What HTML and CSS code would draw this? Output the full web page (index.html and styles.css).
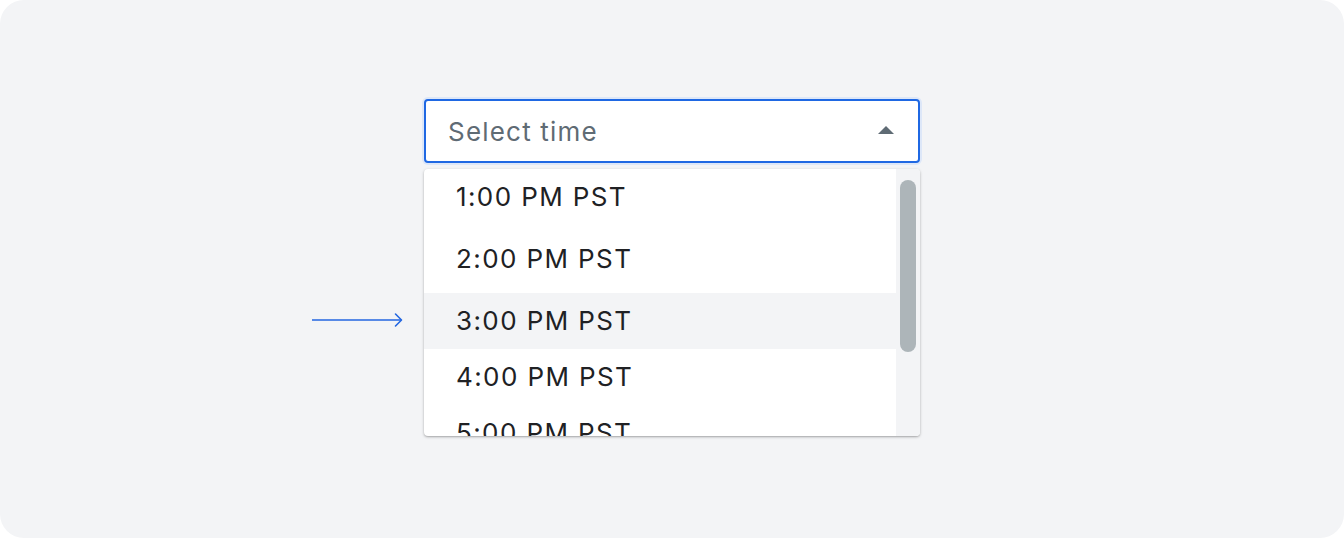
FILE: index.html
```html
<!DOCTYPE html>
<html>
<head>
<meta charset="utf-8">
<link rel="stylesheet" href="styles.css">
</head>
<body>
<div class="panel">
  <div class="combo">
    <div class="pointer">
      <svg width="92" height="16" viewBox="0 0 92 16"><path d="M0 8 H89" stroke="#2366e0" stroke-width="1.6" fill="none"/><path d="M83.5 2 L89.5 8 L83.5 14" stroke="#2366e0" stroke-width="1.6" fill="none" stroke-linecap="round" stroke-linejoin="round"/></svg>
    </div>
    <div class="select">
      <span class="placeholder">Select time</span>
      <span class="caret"></span>
    </div>
    <div class="menu">
      <div class="list">
        <div class="item spaced">1:00 PM PST</div>
        <div class="item spaced">2:00 PM PST</div>
        <div class="item active">3:00 PM PST</div>
        <div class="item">4:00 PM PST</div>
        <div class="item">5:00 PM PST</div>
      </div>
      <div class="track"><div class="thumb"></div></div>
    </div>
  </div>
</div>
</body>
</html>
```
FILE: styles.css
```css
* { box-sizing: border-box; }
html, body { margin: 0; padding: 0; background: #ffffff; }
body { font-family: Inter, "Noto Sans", sans-serif; }
.panel {
  width: 1344px;
  height: 538px;
  background: #f3f4f6;
  border-radius: 24px;
  display: flex;
  flex-direction: column;
  align-items: center;
  padding-top: 99px;
}
.combo {
  position: relative;
  width: 496px;
}
.pointer {
  position: absolute;
  left: -112px;
  top: 213px;
  line-height: 0;
}
.select {
  height: 64px;
  border: 2px solid #1f68e3;
  border-radius: 4px;
  background: #fff;
  box-shadow: 0 0 0 2px #dde7f8;
  display: flex;
  align-items: center;
  justify-content: space-between;
  padding: 0 24px 0 22px;
}
.placeholder {
  font-size: 26px;
  color: #5f6b74;
  letter-spacing: 1.2px;
}
.caret {
  width: 0;
  height: 0;
  border-left: 8px solid transparent;
  border-right: 8px solid transparent;
  border-bottom: 8px solid #5f6b74;
  margin-top: -2px;
}
.menu {
  margin-top: 6px;
  height: 267px;
  background: #fff;
  border-radius: 4px;
  box-shadow: 0 1px 3px rgba(0,0,0,0.28), 0 1px 1px rgba(0,0,0,0.08);
  display: flex;
  overflow: hidden;
}
.list {
  flex: 1;
  display: flex;
  flex-direction: column;
  overflow: hidden;
}
.item {
  flex: none;
  height: 56px;
  display: flex;
  align-items: center;
  padding-left: 32px;
  font-size: 26px;
  color: #202124;
  letter-spacing: 1.4px;
  padding-bottom: 1px;
}
.item.spaced { margin-bottom: 6px; }
.item.active { background: #f3f4f6; }
.track {
  width: 24px;
  background: #f3f4f6;
  padding: 11px 4px 0 4px;
}
.thumb {
  width: 16px;
  height: 172px;
  border-radius: 8px;
  background: #adb5b9;
}
```
